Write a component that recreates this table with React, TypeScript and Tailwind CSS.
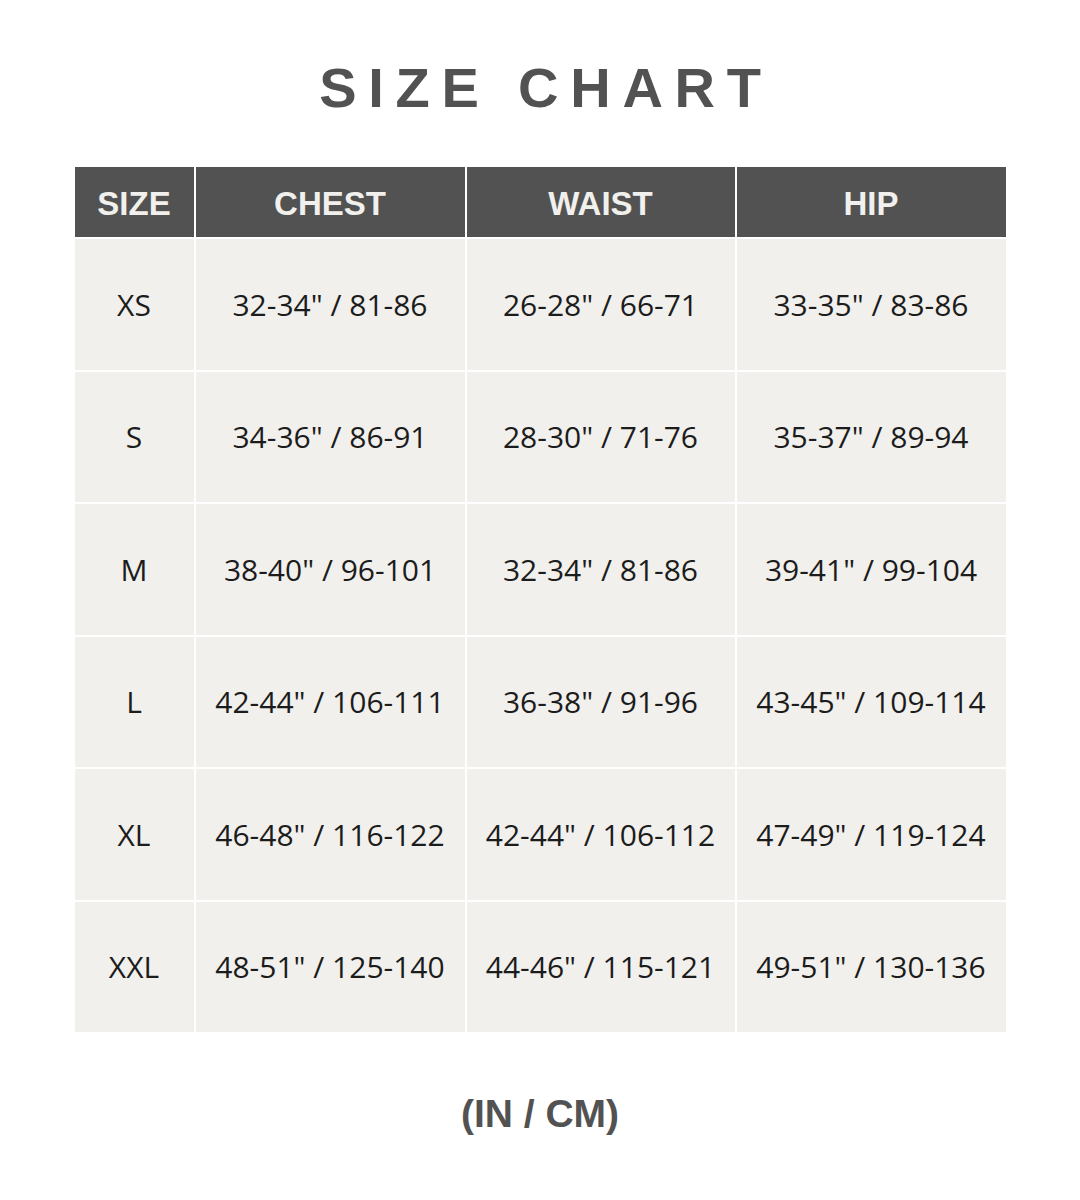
const rows = [
  ['XS', '32-34" / 81-86', '26-28" / 66-71', '33-35" / 83-86'],
  ['S', '34-36" / 86-91', '28-30" / 71-76', '35-37" / 89-94'],
  ['M', '38-40" / 96-101', '32-34" / 81-86', '39-41" / 99-104'],
  ['L', '42-44" / 106-111', '36-38" / 91-96', '43-45" / 109-114'],
  ['XL', '46-48" / 116-122', '42-44" / 106-112', '47-49" / 119-124'],
  ['XXL', '48-51" / 125-140', '44-46" / 115-121', '49-51" / 130-136'],
]

const headers = ['SIZE', 'CHEST', 'WAIST', 'HIP']

export default function App() {
  return (
    <div className="flex h-[1200px] w-[1080px] flex-col items-center bg-white">
      <h1 className="mt-[56px] pl-[12px] font-['Liberation_Sans',Arial,sans-serif] text-[56px] font-bold leading-[64px] tracking-[0.21em] text-[#525252]">
        SIZE CHART
      </h1>

      <div className="mt-[47px] grid w-[931px] grid-cols-[119px_269px_268px_269px] gap-[2px]">
        {headers.map((h) => (
          <div
            key={h}
            className="flex h-[70px] items-center justify-center bg-[#525252] pt-[3px] font-['Liberation_Sans',Arial,sans-serif] text-[33px] font-bold text-[#f1f0ed]"
          >
            {h}
          </div>
        ))}
        {rows.map((row) =>
          row.map((cell, i) => (
            <div
              key={row[0] + i}
              className="flex h-[130.5px] items-center justify-center bg-[#f1f0ed] font-['Open_Sans','Noto_Sans',sans-serif] text-[30px] text-[#1c1c1c]"
            >
              {cell}
            </div>
          )),
        )}
      </div>

      <p className="mt-[60px] font-['Liberation_Sans',Arial,sans-serif] text-[39px] font-bold leading-[44px] text-[#525252]">
        (IN / CM)
      </p>
    </div>
  )
}
